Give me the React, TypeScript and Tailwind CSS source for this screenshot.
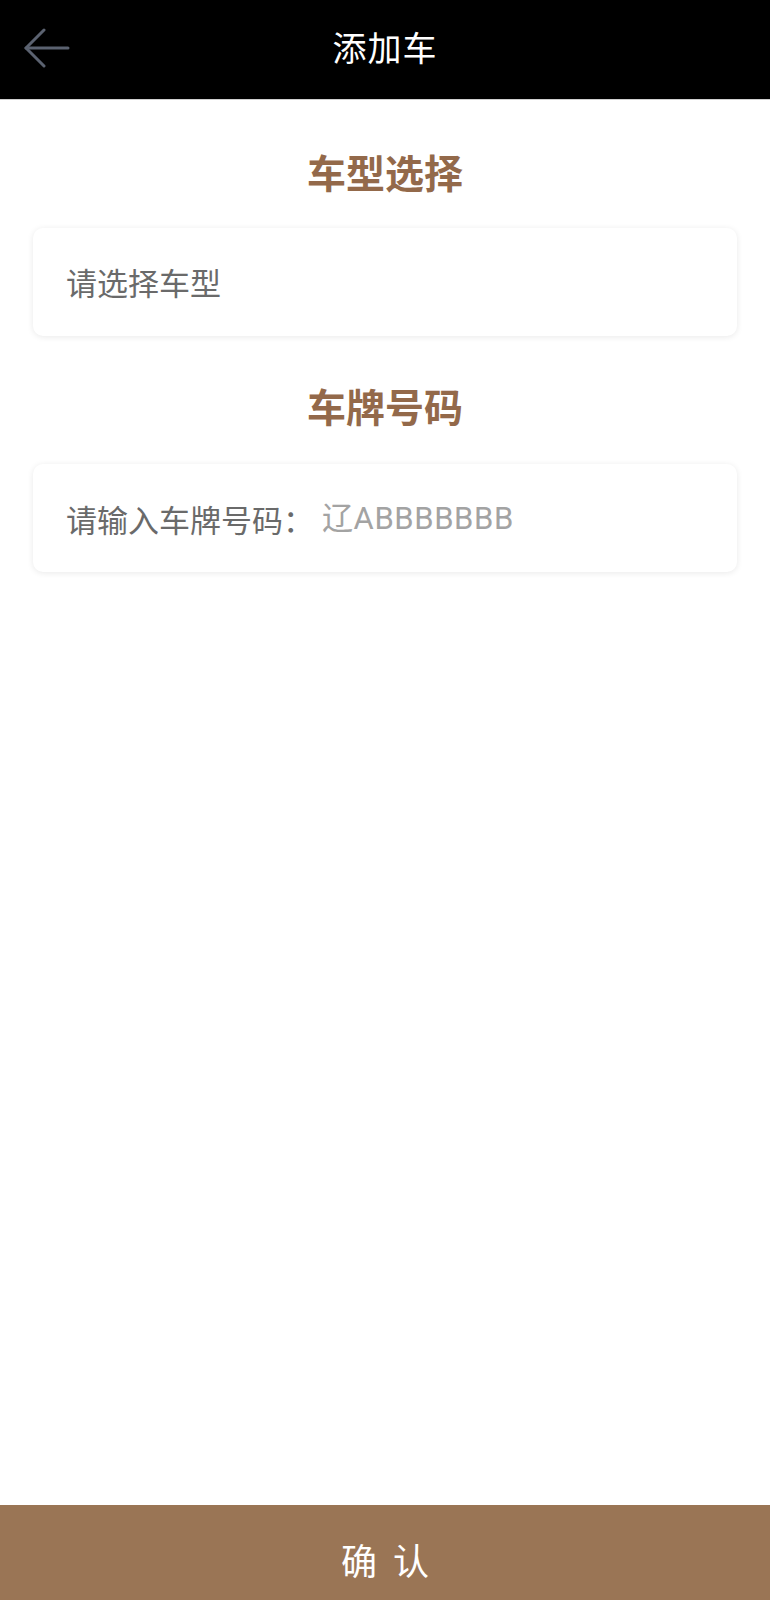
import React from "react";

export default function App() {
  const font = { fontFamily: '"Noto Sans CJK SC", "Noto Sans", sans-serif' };
  return (
    <div className="flex min-h-[1600px] w-full flex-col bg-white" style={font}>
      <header className="relative flex h-[100px] items-center justify-center bg-black border-b border-[#cfcfcf]">
        <svg
          className="absolute left-[24px] top-[27px]"
          width="46"
          height="42"
          viewBox="0 0 46 42"
          fill="none"
          stroke="#5b6270"
          strokeWidth="3"
          strokeLinecap="round"
          strokeLinejoin="round"
        >
          <path d="M20 3 L2 21 L20 39" />
          <path d="M2 21 L44 21" />
        </svg>
        <h1 className="mb-[6px] text-[34px] leading-none text-white tracking-[1px]">添加车</h1>
      </header>

      <main className="flex flex-col px-[33px]">
        <h2 className="mt-[47px] text-center text-[39px] font-bold leading-[48px] text-[#93694a]">车型选择</h2>
        <div className="mt-[33px] flex h-[108px] items-center rounded-[10px] bg-white px-[33px] shadow-[0_1px_6px_rgba(0,0,0,0.09)]">
          <span className="text-[31px] text-[#6a6a6a]">请选择车型</span>
        </div>

        <h2 className="mt-[45px] text-center text-[39px] font-bold leading-[48px] text-[#93694a]">车牌号码</h2>
        <div className="mt-[35px] flex h-[108px] items-center rounded-[10px] bg-white px-[33px] pt-[2px] shadow-[0_1px_6px_rgba(0,0,0,0.09)]">
          <span className="text-[31px] text-[#6a6a6a]">请输入车牌号码：</span>
          <span
            className="ml-[8px] text-[31px] tracking-[0.6px] text-[#a3a3a3]"
            style={{ fontFamily: 'Roboto, "Noto Sans CJK SC", sans-serif' }}
          >
            辽ABBBBBBB
          </span>
        </div>
      </main>

      <button className="mt-auto flex h-[95px] w-full items-center justify-center bg-[#9a7555] pt-[12px] text-[36px] tracking-[16px] text-white">
        <span className="pl-[16px]">确认</span>
      </button>
    </div>
  );
}
